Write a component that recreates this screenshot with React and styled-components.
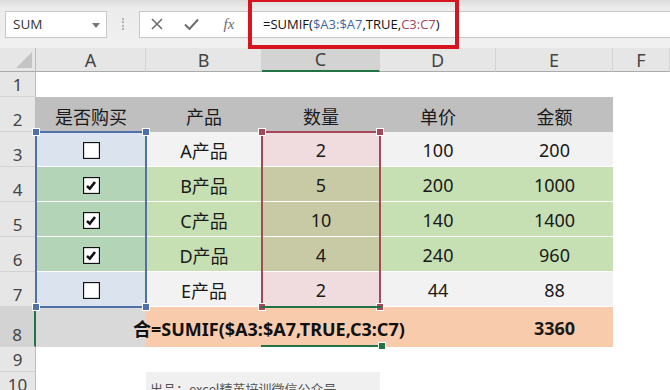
import React from "react";
import styled, { createGlobalStyle } from "styled-components";

const GlobalStyle = createGlobalStyle`
  html, body {
    margin: 0;
    padding: 0;
    background: #fff;
  }
  body {
    width: 670px;
    height: 390px;
    overflow: hidden;
    font-family: "Noto Sans", "Noto Sans CJK SC", sans-serif;
  }
`;

const GREEN = "#217346";
const BLUE = "#4f71a8";
const RED = "#a5485a";

const cols = ["A", "B", "C", "D", "E", "F"];

const header = ["是否购买", "产品", "数量", "单价", "金额"];
const rows = [
  { checked: false, name: "A产品", qty: "2", price: "100", total: "200" },
  { checked: true, name: "B产品", qty: "5", price: "200", total: "1000" },
  { checked: true, name: "C产品", qty: "10", price: "140", total: "1400" },
  { checked: true, name: "D产品", qty: "4", price: "240", total: "960" },
  { checked: false, name: "E产品", qty: "2", price: "44", total: "88" },
];

// background of a data cell, including the tint of the selected ranges
const cellBg = (checked, col) => {
  if (col === 0) return checked ? "#b4d4b8" : "#dbe3ee";
  if (col === 2) return checked ? "#c8c9a5" : "#f0dcdf";
  return checked ? "#c6e0b4" : "#f2f2f2";
};

const App = () => {
  return (
    <Wrap>
      <GlobalStyle />
      <FormulaBar>
        <NameBox>
          SUM
          <DropArrow />
        </NameBox>
        <Grip />
        <FormulaBox>
          <IconBtn>
            <svg width="12" height="12" viewBox="0 0 12 12">
              <path d="M1 1 L11 11 M11 1 L1 11" stroke="#6d6d6d" strokeWidth="1.6" fill="none" />
            </svg>
          </IconBtn>
          <IconBtn>
            <svg width="15" height="12" viewBox="0 0 15 12">
              <path d="M1 6.5 L5.5 11 L14 1.5" stroke="#6d6d6d" strokeWidth="2" fill="none" />
            </svg>
          </IconBtn>
          <FxBtn>fx</FxBtn>
          <FormulaText>
            =SUMIF(<Ref color="#3d67a8">$A3:$A7</Ref>,TRUE,<Ref color="#a8405a">C3:C7</Ref>)
          </FormulaText>
        </FormulaBox>
      </FormulaBar>

      <Sheet>
        <Corner>
          <CornerTri />
        </Corner>
        {cols.map((c, i) => (
          <ColHeader key={c} $col={i + 2} $active={c === "C"}>
            {c}
          </ColHeader>
        ))}

        {[1, 2, 3, 4, 5, 6, 7, 8, 9, 10].map((n) => (
          <RowHeader key={n} $row={n + 1} $active={n === 8}>
            {n}
          </RowHeader>
        ))}

        {header.map((h, i) => (
          <Cell key={h} $col={i + 2} $row={3} $bg="#bfbfbf">
            {h}
          </Cell>
        ))}

        {rows.map((r, ri) => {
          const vals = [null, r.name, r.qty, r.price, r.total];
          return vals.map((v, ci) => (
            <Cell
              key={`${ri}-${ci}`}
              $col={ci + 2}
              $row={ri + 4}
              $bg={cellBg(r.checked, ci)}
              $line
            >
              {ci === 0 ? <CheckBox checked={r.checked} /> : v}
            </Cell>
          ));
        })}

        <Cell $col={2} $row={9} $bg="#d9d9d9" />
        <Cell $col={3} $row={9} $span={4} $bg="#f8cbad" />
        <Cell $col={6} $row={9} $bold>
          3360
        </Cell>
        <EditText>合=SUMIF($A3:$A7,TRUE,C3:C7)</EditText>

        <Frame $col={2} $color={BLUE}>
          <Handle $color={BLUE} $x="left" $y="top" />
          <Handle $color={BLUE} $x="right" $y="top" />
          <Handle $color={BLUE} $x="left" $y="bottom" />
          <Handle $color={BLUE} $x="right" $y="bottom" />
        </Frame>
        <Frame $col={4} $color={RED}>
          <Handle $color={RED} $x="left" $y="top" />
          <Handle $color={RED} $x="right" $y="top" />
          <Handle $color={RED} $x="left" $y="bottom" />
          <Handle $color={RED} $x="right" $y="bottom" />
        </Frame>
        <ActiveCell>
          <Handle $color={GREEN} $x="right" $y="bottom" />
        </ActiveCell>

        <Credit>出品：excel精英培训微信公众号</Credit>
      </Sheet>
    </Wrap>
  );
};

const CheckBox = ({ checked }) => (
  <svg width="17" height="17" viewBox="0 0 17 17">
    <rect x="0.5" y="0.5" width="16" height="16" fill="#fff" stroke="#111" strokeWidth="1.3" />
    {checked && (
      <path d="M4 9 L6.8 11.6 L12 5" stroke="#111" strokeWidth="2.6" fill="none" />
    )}
  </svg>
);

const Wrap = styled.div`
  width: 670px;
  height: 390px;
  overflow: hidden;
  background: #fff;
`;

const FormulaBar = styled.div`
  height: 48px;
  display: flex;
  align-items: center;
  padding-left: 5px;
  box-sizing: border-box;
  background: linear-gradient(#dcdcdc 0, #ececec 8px, #f0f0f0 100%);
`;

const NameBox = styled.div`
  position: relative;
  width: 102px;
  height: 27px;
  box-sizing: border-box;
  background: #fff;
  border: 1px solid #c8c8c8;
  display: flex;
  align-items: center;
  padding-left: 7px;
  font-family: "Open Sans", sans-serif;
  font-size: 13.5px;
  color: #333;
`;

const DropArrow = styled.span`
  position: absolute;
  right: 6px;
  top: 11px;
  border-left: 4px solid transparent;
  border-right: 4px solid transparent;
  border-top: 5px solid #777;
`;

const Grip = styled.div`
  width: 0;
  height: 12px;
  margin: 0 15px 0 15px;
  border-left: 2px dotted #b5b5b5;
`;

const FormulaBox = styled.div`
  flex: 1;
  height: 27px;
  box-sizing: border-box;
  background: #fff;
  border: 1px solid #c8c8c8;
  border-right: none;
  display: flex;
  align-items: center;
`;

const IconBtn = styled.div`
  width: 34px;
  display: flex;
  justify-content: center;
  align-items: center;
`;

const FxBtn = styled.div`
  width: 42px;
  text-align: center;
  font-family: "Liberation Serif", serif;
  font-style: italic;
  font-size: 15px;
  color: #6d6d6d;
`;

const FormulaText = styled.div`
  position: relative;
  width: 208px;
  height: 100%;
  box-sizing: border-box;
  display: flex;
  align-items: center;
  padding-left: 13px;
  font-family: "Open Sans", sans-serif;
  font-size: 13px;
  color: #111;
  white-space: nowrap;

  &::before {
    content: "";
    position: absolute;
    left: -2px;
    right: -1px;
    top: -14px;
    bottom: -12px;
    border: 4px solid #d8151f;
  }
`;

const Ref = styled.span`
  color: ${(p) => p.color};
`;

const Sheet = styled.div`
  display: grid;
  grid-template-columns: 36px 110px 116px 118px 116px 117px 57px;
  grid-template-rows: 24px 25px repeat(6, 35px) 40px 25px 25px;
  font-family: "Noto Sans", "Noto Sans CJK SC", sans-serif;
`;

const Corner = styled.div`
  grid-column: 1;
  grid-row: 1;
  background: #e6e6e6;
  border-right: 1px solid #bdbdbd;
  border-bottom: 1px solid #ababab;
  display: flex;
  justify-content: flex-end;
  align-items: flex-end;
  padding: 0 3px 3px 0;
`;

const CornerTri = styled.div`
  width: 0;
  height: 0;
  border-left: 16px solid transparent;
  border-bottom: 16px solid #c4c4c4;
`;

const ColHeader = styled.div`
  grid-column: ${(p) => p.$col};
  grid-row: 1;
  background: ${(p) => (p.$active ? "#d3d3d3" : "#e6e6e6")};
  border-right: 1px solid #d3d3d3;
  border-bottom: ${(p) => (p.$active ? `2px solid ${GREEN}` : "1px solid #ababab")};
  display: flex;
  justify-content: center;
  align-items: flex-end;
  font-size: 18px;
  line-height: 22px;
  color: #444;
`;

const RowHeader = styled.div`
  grid-column: 1;
  grid-row: ${(p) => p.$row};
  background: ${(p) => (p.$active ? "#d3d3d3" : "#e6e6e6")};
  border-bottom: 1px solid #d3d3d3;
  border-right: ${(p) => (p.$active ? `2px solid ${GREEN}` : "1px solid #bdbdbd")};
  display: flex;
  justify-content: center;
  align-items: flex-end;
  font-size: 17px;
  line-height: 22px;
  color: #444;
`;

const Cell = styled.div`
  grid-column: ${(p) => p.$col} / span ${(p) => p.$span || 1};
  grid-row: ${(p) => p.$row};
  background: ${(p) => p.$bg || "transparent"};
  border-bottom: ${(p) => (p.$line ? "1px solid #fff" : "none")};
  display: flex;
  justify-content: center;
  align-items: center;
  padding-top: 2px;
  font-size: 18px;
  font-weight: ${(p) => (p.$bold ? 700 : 400)};
  color: #1a1a1a;
  z-index: 1;
`;

const EditText = styled.div`
  grid-column: 2 / span 4;
  grid-row: 9;
  display: flex;
  align-items: center;
  padding: 2px 0 0 97px;
  font-size: 18px;
  font-weight: 700;
  color: #111;
  white-space: nowrap;
  z-index: 2;
`;

const Frame = styled.div`
  grid-column: ${(p) => p.$col};
  grid-row: 4 / span 5;
  position: relative;
  border: 2px solid ${(p) => p.$color};
  margin: -1px -1px -1px -1px;
  z-index: 3;
  pointer-events: none;
`;

const ActiveCell = styled.div`
  grid-column: 4;
  grid-row: 9;
  position: relative;
  border-top: 2px solid ${GREEN};
  border-bottom: 2px solid ${GREEN};
  margin: -1px -1px 0 -1px;
  z-index: 3;
`;

const Handle = styled.span`
  position: absolute;
  width: 6px;
  height: 6px;
  background: ${(p) => p.$color};
  border: 1px solid #fff;
  ${(p) => p.$x}: -5px;
  ${(p) => p.$y}: -5px;
`;

const Credit = styled.div`
  grid-column: 3 / span 2;
  grid-row: 11;
  background: #f0f0f0;
  display: flex;
  align-items: flex-start;
  padding: 7px 0 0 4px;
  font-family: "Noto Sans CJK SC", sans-serif;
  font-size: 13px;
  color: #555;
  white-space: nowrap;
`;

export default App;
